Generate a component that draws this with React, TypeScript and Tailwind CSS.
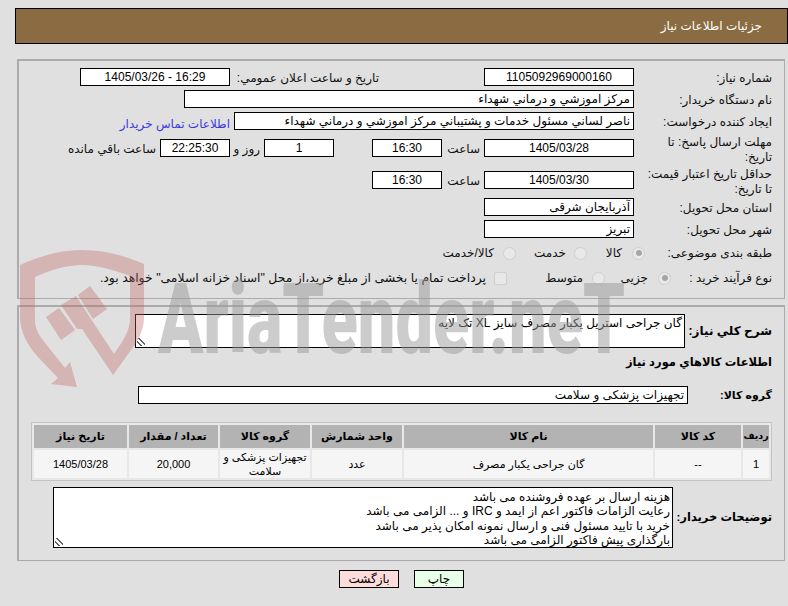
const boxCls = "h-[18px] shrink-0 border border-black bg-white leading-[16px] text-black";
const resizeCls =
  "absolute bottom-[1px] left-[1px] h-[8px] w-[8px] bg-[linear-gradient(45deg,transparent_25%,#666_25%,#666_36%,transparent_36%,transparent_52%,#666_52%,#666_63%,transparent_63%)]";

function Label({ children, className = "" }: { children: React.ReactNode; className?: string }) {
  return <div className={"shrink-0 text-[12px] leading-[14px] text-[#111] " + className}>{children}</div>;
}

function Box({ children, className = "" }: { children?: React.ReactNode; className?: string }) {
  return <div className={boxCls + " " + className}>{children}</div>;
}

function Radio({ checked = false }: { checked?: boolean }) {
  return (
    <span className="flex h-[13px] w-[13px] shrink-0 items-center justify-center rounded-full border border-[#d0d0d0] bg-[#e8e8e8]">
      {checked && <span className="h-[6px] w-[6px] rounded-full bg-[#a6a6a6]" />}
    </span>
  );
}

function Watermark() {
  return (
    <div className="pointer-events-none absolute left-[20px] top-[250px] h-[150px] w-[620px]" dir="ltr">
      <svg className="absolute left-0 top-0" width="126" height="140" viewBox="0 0 126 140">
        <g fill="#c06060" fillOpacity="0.35">
          <path d="M0 15 C20 6 40 0 62 0 C85 0 105 6 124 14 L124 67 C124 78 120 86 116 93 L93 125 L94 104 C102 92 110 82 110 68 L110 26 C94 20 78 15 62 15 C46 15 30 20 15 27 L15 70 C15 78 18 83 22 89 L45 118 L50 112 L57 137 L31 134 L38 128 L18 107 C8 96 0 82 0 67 Z" />
          <path d="M41 55 L56 46 L71 69 L94 104 L93 125 L62 79 L57 79 Z" />
          <path d="M58 45 L70 36 L87 59 L73 69 Z" />
          <path d="M26 67 L39 58 L55 80 L41 90 Z" />
        </g>
      </svg>
      <div
        className="absolute left-[138px] top-[10px] origin-left scale-x-[0.68] whitespace-nowrap text-[98px] font-black leading-[120px] text-[#9a9a9a] opacity-50"
        style={{ fontFamily: '"Roboto", sans-serif' }}
      >
        AriaTender.neT
      </div>
    </div>
  );
}

export default function App() {
  return (
    <div
      dir="rtl"
      className="relative h-[606px] w-[788px] overflow-hidden bg-[#e0e0e0] pt-[8px] text-[12px]"
      style={{ fontFamily: '"Liberation Sans", "DejaVu Sans", sans-serif' }}
    >
      <div className="ml-[15px] flex h-[36px] items-center border border-black bg-[#8b6c42] pr-[25px] text-[12px] text-white">
        جزئیات اطلاعات نیاز
      </div>

      <div className="ml-[17px] mr-[3px] mt-[15px] h-[240px] border-2 border-b-[1px] border-r-[1px] border-[#ababab] pr-[12px] pt-[7px]">
        <div className="flex h-[22px] items-start">
          <Label className="w-[138px] pt-[3px]">شماره نیاز:</Label>
          <Box className="w-[150px] text-center">1105092969000160</Box>
          <Label className="mr-[105px] w-[149px] pt-[3px]">تاریخ و ساعت اعلان عمومي:</Label>
          <Box className="w-[150px] text-center">
            <span dir="ltr">1405/03/26 - 16:29</span>
          </Box>
        </div>
        <div className="flex h-[22px] items-start">
          <Label className="w-[138px] pt-[3px]">نام دستگاه خریدار:</Label>
          <Box className="w-[450px] pr-[3px]">مرکز اموزشي و درماني شهداء</Box>
        </div>
        <div className="flex h-[27px] items-start">
          <Label className="w-[138px] pt-[3px]">ایجاد کننده درخواست:</Label>
          <Box className="w-[400px] pr-[3px]">ناصر لساني مسئول خدمات و پشتیباني مرکز اموزشي و درماني شهداء</Box>
          <span className="mr-[4px] pt-[3px] text-[12px] text-[#3a3adf]">اطلاعات تماس خریدار</span>
        </div>
        <div className="flex h-[32px] items-start">
          <Label className="-mt-[4px] w-[138px] pl-[14px] leading-[15px]">مهلت ارسال پاسخ: تا تاریخ:</Label>
          <Box className="w-[150px] text-center">1405/03/28</Box>
          <Label className="w-[42px] pr-[4px] pt-[3px]">ساعت</Label>
          <Box className="w-[70px] text-center">16:30</Box>
          <Box className="mr-[38px] w-[70px] text-center">1</Box>
          <Label className="w-[34px] pr-[4px] pt-[3px]">روز و</Label>
          <Box className="w-[70px] bg-[#fffff0] text-center">22:25:30</Box>
          <Label className="pr-[4px] pt-[3px]">ساعت باقي مانده</Label>
        </div>
        <div className="flex h-[27px] items-start">
          <Label className="-mt-[4px] w-[138px] pl-[12px] leading-[15px]">حداقل تاریخ اعتبار قیمت: تا تاریخ:</Label>
          <Box className="w-[150px] text-center">1405/03/30</Box>
          <Label className="w-[42px] pr-[4px] pt-[3px]">ساعت</Label>
          <Box className="w-[70px] text-center">16:30</Box>
        </div>
        <div className="flex h-[22px] items-start">
          <Label className="w-[138px] pt-[3px]">استان محل تحویل:</Label>
          <Box className="w-[150px] pr-[3px]">آذربایجان شرقی</Box>
        </div>
        <div className="flex h-[21px] items-start">
          <Label className="w-[138px] pt-[3px]">شهر محل تحویل:</Label>
          <Box className="w-[150px] pr-[3px]">تبریز</Box>
        </div>
        <div className="flex h-[24px] items-center">
          <Label className="w-[127px]">طبقه بندی موضوعی:</Label>
          <Radio checked />
          <Label className="mr-[10px] w-[35px]">کالا</Label>
          <Radio />
          <Label className="mr-[8px] w-[50px]">خدمت</Label>
          <Radio />
          <Label className="mr-[9px]">کالا/خدمت</Label>
        </div>
        <div className="flex h-[26px] items-center">
          <Label className="w-[101px]">نوع فرآیند خرید :</Label>
          <Radio checked />
          <Label className="mr-[10px] w-[43px]">جزیی</Label>
          <Radio />
          <Label className="mr-[9px] w-[76px]">متوسط</Label>
          <span className="h-[13px] w-[13px] shrink-0 rounded-[2px] border border-[#d0d0d0] bg-[#e8e8e8]" />
          <Label className="mr-[8px] whitespace-nowrap">
            <span className="text-[12.4px]">پرداخت تمام یا بخشی از مبلغ خرید،از محل "اسناد خزانه اسلامی" خواهد بود.</span>
          </Label>
        </div>
      </div>

      <div className="ml-[17px] mr-[3px] mt-[6px] h-[256px] border-2 border-b-[1px] border-r-[1px] border-[#ababab] pr-[12px] pt-[7px]">
        <div className="flex items-center">
          <div className="w-[87px] shrink-0 whitespace-nowrap text-[12px] font-bold text-black">شرح کلي نیاز:</div>
          <div className="relative h-[34px] w-[550px] border border-black bg-white pr-[2px] text-[12px] leading-[16px] text-black">
            گان جراحی استریل یکبار مصرف سایز XL تک لایه
            <span className={resizeCls} />
          </div>
        </div>
        <div className="mt-[6px] h-[16px] whitespace-nowrap text-[11.5px] font-bold leading-[16px] text-black">
          اطلاعات کالاهاي مورد نیاز
        </div>
        <div className="mt-[16px] flex items-center">
          <div className="w-[84px] shrink-0 whitespace-nowrap text-[11px] font-bold text-black">گروه کالا:</div>
          <Box className="w-[550px] pr-[3px]">تجهیزات پزشکی و سلامت</Box>
        </div>

        <div className="mt-[18px] grid h-[59px] w-[741px] grid-cols-[26px_86px_249px_90px_90px_89px_93px] grid-rows-[23px_28px] gap-[2px] border border-[#c4c4c4] bg-[#e8e8e8] p-[2px] text-center text-[11px]">
          {["ردیف", "کد کالا", "نام کالا", "واحد شمارش", "گروه کالا", "تعداد / مقدار", "تاریخ نیاز"].map((h) => (
            <div
              key={h}
              className={
                "flex items-center justify-center whitespace-nowrap bg-[#b3b3b3] font-bold text-black " +
                (h === "ردیف" ? "text-[9.5px]" : "")
              }
            >
              {h}
            </div>
          ))}
          {["1", "--", "گان جراحی یکبار مصرف", "عدد", "تجهیزات پزشکی و سلامت", "20,000", "1405/03/28"].map((c) => (
            <div key={c} className="flex items-center justify-center bg-[#f5f5f5] leading-[14px] text-black">
              {c}
            </div>
          ))}
        </div>

        <div className="mt-[6px] flex items-center">
          <div className="w-[99px] shrink-0 whitespace-nowrap text-[11.5px] font-bold text-black">توضیحات خریدار:</div>
          <div className="relative h-[61px] w-[620px] border border-black bg-white pr-[2px] pt-[2px] text-[12px] leading-[14.3px] text-black">
            <div>هزینه ارسال بر عهده فروشنده می باشد</div>
            <div>رعایت الزامات فاکتور اعم از ایمد و IRC و ... الزامی می باشد</div>
            <div>خرید با تایید مسئول فنی و ارسال نمونه امکان پذیر می باشد</div>
            <div>بارگذاری پیش فاکتور الزامی می باشد</div>
            <span className={resizeCls} />
          </div>
        </div>
      </div>

      <div className="mt-[9px] flex justify-center gap-[15px] pl-[15px]">
        <div className="flex h-[18px] w-[50px] items-center justify-center border border-black bg-[#e8ffe8] text-[12px] text-black">چاپ</div>
        <div className="flex h-[18px] w-[60px] items-center justify-center border border-black bg-[#ffdcdc] text-[12px] text-black">بازگشت</div>
      </div>

      <Watermark />
    </div>
  );
}
